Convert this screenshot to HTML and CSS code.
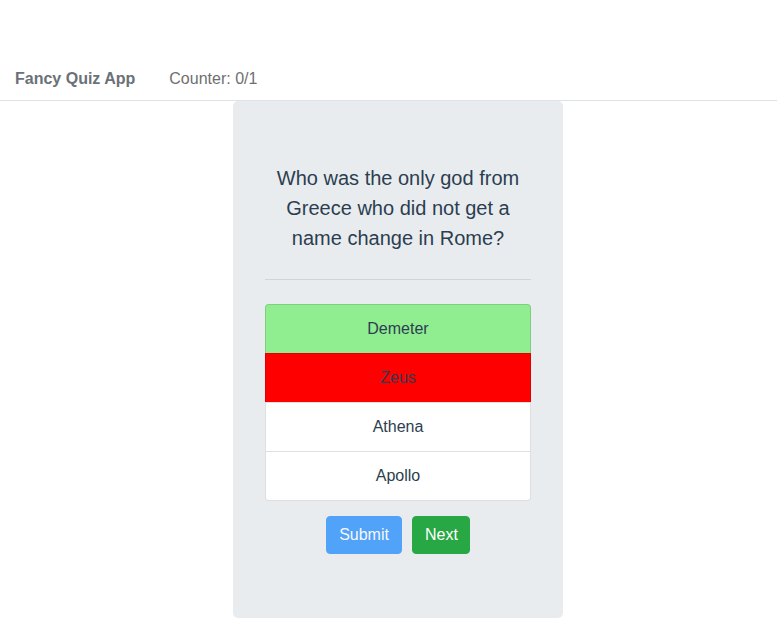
FILE: index.html
```html
<!DOCTYPE html>
<html lang="en">
<head>
<meta charset="utf-8">
<title>Fancy Quiz App</title>
<link rel="stylesheet" href="styles.css">
</head>
<body>
<div class="app">
  <nav class="navbar">
    <span class="brand">Fancy Quiz App</span>
    <span class="counter">Counter: 0/1</span>
  </nav>
  <main class="main">
    <section class="jumbotron">
      <p class="question">Who was the only god from Greece who did not get a name change in Rome?</p>
      <hr class="divider">
      <ul class="answers">
        <li class="answer correct">Demeter</li>
        <li class="answer wrong">Zeus</li>
        <li class="answer">Athena</li>
        <li class="answer">Apollo</li>
      </ul>
      <div class="actions">
        <button class="btn btn-primary" disabled>Submit</button>
        <button class="btn btn-success">Next</button>
      </div>
    </section>
  </main>
</div>
</body>
</html>
```
FILE: styles.css
```css
* { box-sizing: border-box; }
html, body { margin: 0; padding: 0; background: #fff; }
body {
  font-family: "Liberation Sans", Arial, Helvetica, sans-serif;
  font-size: 16px;
  line-height: 1.5;
  color: #2c3e50;
}
.app { margin-top: 60px; }
.navbar {
  display: flex;
  align-items: center;
  padding: 7px 15px 9px;
  border-bottom: 1px solid #dee2e6;
}
.brand {
  font-weight: bold;
  color: #6a7178;
  margin-right: 34px;
}
.counter { color: #6f6f6f; }
.main {
  width: 330px;
  margin-left: 233px;
}
.jumbotron {
  background: #e9ecef;
  border-radius: 5px;
  padding: 62px 32px 64px;
  text-align: center;
}
.question {
  margin: 0 auto;
  width: 266px;
  font-size: 20px;
  line-height: 30px;
  padding: 0 8px;
}
.divider {
  margin: 26px 0 0;
  border: 0;
  border-top: 1px solid #d2d4d7;
}
.answers {
  list-style: none;
  padding: 0;
  margin: 24px 0 0;
  display: flex;
  flex-direction: column;
}
.answer {
  background: #fff;
  border: 1px solid rgba(0, 0, 0, 0.125);
  padding: 12px 20px;
  line-height: 24px;
  margin-bottom: -1px;
}
.answer:first-child { border-radius: 4px 4px 0 0; }
.answer:last-child { border-radius: 0 0 4px 4px; margin-bottom: 0; }
.answer.correct { background: #90ee90; }
.answer.wrong { background: #ff0000; }
.actions {
  display: flex;
  justify-content: center;
  gap: 10px;
  margin-top: 15px;
}
.btn {
  font-family: inherit;
  font-size: 16px;
  line-height: 24px;
  padding: 6px 12px;
  border-radius: 4px;
  border: 1px solid transparent;
  color: #fff;
}
.btn-primary { background: #007bff; border-color: #007bff; opacity: 0.65; padding: 6px 12.5px; }
.btn-success { background: #28a745; border-color: #28a745; padding: 6px 11.5px; }
```
